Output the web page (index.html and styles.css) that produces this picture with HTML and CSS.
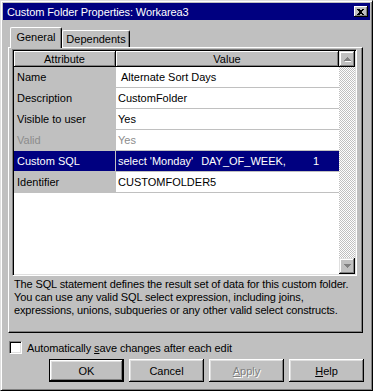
FILE: index.html
```html
<!DOCTYPE html>
<html>
<head>
<meta charset="utf-8">
<link rel="stylesheet" href="styles.css">
</head>
<body>
<div class="window">
  <div class="titlebar">
    <span class="title">Custom Folder Properties: Workarea3</span>
    <div class="close">
      <svg width="7" height="6" viewBox="0 0 7 6" shape-rendering="crispEdges"><path d="M0 0h2l1.5 1.5L5 0h2L4.5 3L7 6H5L3.5 4.5L2 6H0l2.5-3z" fill="#000"/></svg>
    </div>
  </div>
  <div class="content">
    <div class="tabs">
      <div class="tab active">General</div>
      <div class="tab dep">Dependents</div>
    </div>
    <div class="panel">
      <div class="grid">
        <div class="table">
          <div class="row head">
            <div class="hcell attr-h">Attribute</div>
            <div class="hcell val-h">Value</div>
          </div>
          <div class="row">
            <div class="attr">Name</div>
            <div class="val edit">Alternate Sort Days</div>
          </div>
          <div class="row">
            <div class="attr">Description</div>
            <div class="val">CustomFolder</div>
          </div>
          <div class="row">
            <div class="attr">Visible to user</div>
            <div class="val">Yes</div>
          </div>
          <div class="row disabled">
            <div class="attr">Valid</div>
            <div class="val">Yes</div>
          </div>
          <div class="row selected">
            <div class="attr">Custom SQL</div>
            <div class="val"><span>select 'Monday'</span><span class="sql2">DAY_OF_WEEK,</span><span class="sql3">1</span></div>
          </div>
          <div class="row">
            <div class="attr">Identifier</div>
            <div class="val">CUSTOMFOLDER5</div>
          </div>
        </div>
        <div class="scrollbar">
          <div class="sbtn"><svg width="7" height="5" viewBox="0 0 7 5" shape-rendering="crispEdges"><path d="M4 1h1v1h1v1h1v1h1v1H1z" fill="#fff"/><path d="M3 0h1v1h1v1h1v1h1v1H0V3h1V2h1V1h1z" fill="#808080"/></svg></div>
          <div class="track"></div>
          <div class="sbtn"><svg width="7" height="5" viewBox="0 0 7 5" shape-rendering="crispEdges"><path d="M0 0h7v1H6v1H5v1H4v1H3V3H2V2H1V1H0z" fill="#808080"/></svg></div>
        </div>
      </div>
      <p class="desc">The SQL statement defines the result set of data for this custom folder.<br>You can use any valid SQL select expression, including joins,<br>expressions, unions, subqueries or any other valid select constructs.</p>
    </div>
    <label class="check"><span class="box"></span><span class="check-label">Automatically <u>s</u>ave changes after each edit</span></label>
    <div class="buttons">
      <div class="btn default">OK</div>
      <div class="btn">Cancel</div>
      <div class="btn disabled"><u>A</u>pply</div>
      <div class="btn"><u>H</u>elp</div>
    </div>
  </div>
</div>
</body>
</html>
```
FILE: styles.css
```css
* { box-sizing: border-box; }
html, body { margin: 0; padding: 0; }
body {
  width: 373px;
  height: 391px;
  overflow: hidden;
  background: #c0c0c0;
  font-family: "Liberation Sans", Arial, sans-serif;
  font-size: 11px;
  color: #000;
}
.window {
  width: 373px;
  height: 391px;
  background: #c0c0c0;
  border: 1px solid;
  border-color: #dfdfdf #000 #000 #dfdfdf;
  box-shadow: inset 1px 1px #fff, inset -1px -1px #808080;
  padding: 2px;
  display: flex;
  flex-direction: column;
}
.titlebar {
  height: 17px;
  background: #000080;
  color: #fff;
  display: flex;
  align-items: center;
  padding: 0 2px 0 4px;
}
.title { font-size: 11px; letter-spacing: -0.1px; }
.close {
  margin-left: auto;
  width: 14px;
  height: 11px;
  background: #c0c0c0;
  box-shadow: inset -1px -1px #000, inset 1px 1px #fff, inset -2px -2px #808080;
  display: flex;
  align-items: center;
  justify-content: center;
  padding-right: 1px;
}
.close svg { display: block; }
.content {
  padding: 7px 0 0 5px;
  display: flex;
  flex-direction: column;
}
.tabs {
  display: flex;
  align-items: flex-end;
  height: 20px;
  padding-left: 2px;
}
.tab {
  height: 17px;
  border: 1px solid;
  border-color: #fff #000 transparent #fff;
  border-bottom: none;
  border-radius: 2px 2px 0 0;
  box-shadow: inset -1px 0 #808080;
  display: flex;
  align-items: center;
  justify-content: center;
  background: #c0c0c0;
}
.tab.active {
  width: 52px;
  height: 21px;
  margin-bottom: -1px;
  position: relative;
  z-index: 1;
  padding-bottom: 2px;
}
.tab.dep { width: 68px; }
.panel {
  width: 355px;
  height: 286px;
  border: 1px solid;
  border-color: #fff #000 #000 #fff;
  box-shadow: inset -1px -1px #808080;
  padding: 1px 5px 0 3px;
  display: flex;
  flex-direction: column;
}
.grid {
  height: 227px;
  display: flex;
  border: 1px solid;
  border-color: #808080 #fff #fff #808080;
  box-shadow: inset 1px 1px #000, inset -1px -1px #dfdfdf;
  padding: 1px;
  background: #fff;
}
.table {
  flex: 1;
  display: flex;
  flex-direction: column;
  background: #fff;
}
.row {
  display: flex;
  height: 21px;
}
.row.head { height: 16px; }
.hcell {
  height: 16px;
  background: #c0c0c0;
  border-right: 1px solid #000;
  border-bottom: 1px solid #000;
  box-shadow: inset 1px 1px #fff, inset -1px -1px #808080;
  display: flex;
  align-items: center;
  justify-content: center;
}
.attr-h { width: 102px; }
.val-h { flex: 1; }
.attr {
  width: 102px;
  background: #c0c0c0;
  border-right: 1px solid #c0c0c0;
  border-bottom: 1px solid #c0c0c0;
  padding-left: 3px;
  display: flex;
  align-items: center;
  white-space: nowrap;
}
.val {
  flex: 1;
  background: #fff;
  border-bottom: 1px solid #c0c0c0;
  padding-left: 2px;
  display: flex;
  align-items: center;
  white-space: nowrap;
}
.val.edit { padding-left: 5px; }
.row.disabled .attr, .row.disabled .val { color: #8c8c8c; }
.row.selected .attr, .row.selected .val { background: #000080; color: #fff; }
.sql2 { margin-left: 8px; }
.sql3 { margin-left: 27px; }
.scrollbar {
  width: 16px;
  display: flex;
  flex-direction: column;
}
.sbtn {
  width: 16px;
  height: 16px;
  background: #c0c0c0;
  box-shadow: inset -1px -1px #000, inset 1px 1px #dfdfdf, inset -2px -2px #808080, inset 2px 2px #fff;
  display: flex;
  align-items: center;
  justify-content: center;
}
.sbtn svg { display: block; }
.track {
  flex: 1;
  background: repeating-conic-gradient(#fff 0 25%, #c0c0c0 0 50%) 0 0 / 2px 2px;
}
.desc {
  margin: 2px 0 0 2px;
  line-height: 13px;
  white-space: nowrap;
  letter-spacing: -0.13px;
}
.check {
  display: flex;
  align-items: center;
  margin: 8px 0 0 1px;
  height: 13px;
}
.box {
  width: 13px;
  height: 13px;
  background: #fff;
  border: 1px solid;
  border-color: #808080 #fff #fff #808080;
  box-shadow: inset 1px 1px #000, inset -1px -1px #dfdfdf;
}
.check-label { margin-left: 5px; letter-spacing: -0.1px; }
.buttons {
  display: flex;
  justify-content: flex-end;
  gap: 5px;
  margin-top: 5px;
  padding-right: 6px;
}
.btn {
  width: 75px;
  height: 23px;
  background: #c0c0c0;
  box-shadow: inset -1px -1px #000, inset 1px 1px #fff, inset -2px -2px #808080, inset 2px 2px #dfdfdf;
  display: flex;
  align-items: center;
  justify-content: center;
}
.btn.default {
  border: 1px solid #000;
}
.btn.disabled {
  color: #808080;
  text-shadow: 1px 1px #fff;
}
```
